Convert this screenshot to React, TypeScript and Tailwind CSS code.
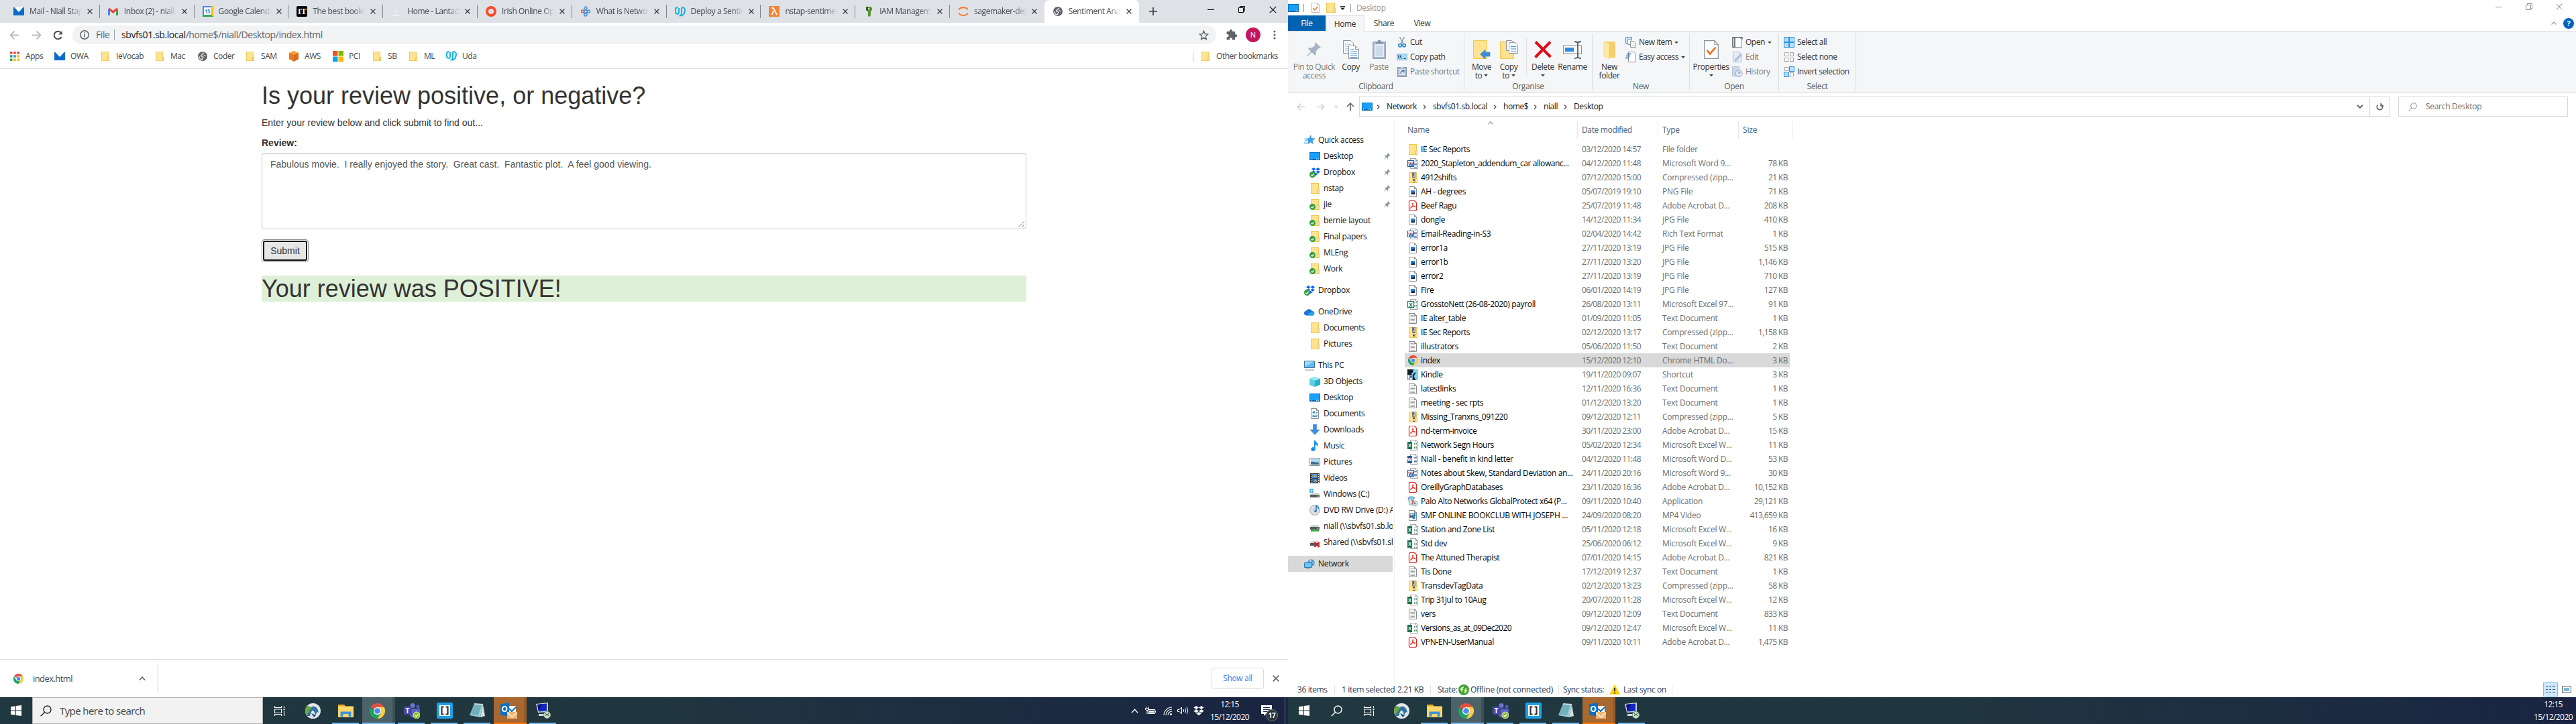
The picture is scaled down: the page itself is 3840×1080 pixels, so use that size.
import React, { ReactNode } from "react";

/* ---------- shared glyphs ---------- */

const Folder = ({ className = "w-[13px] h-4" }: { className?: string }) => (
  <svg className={className} viewBox="0 0 13 16" preserveAspectRatio="none">
    <rect x=".5" y=".5" width="11" height="15" fill="#ffe391" stroke="#f0c84f" />
    <path d="M10.5 9.5h2v6h-2z" fill="#ffe9a8" stroke="#e9bd45" />
  </svg>
);

const Desk = () => (
  <svg className="w-4 h-3" viewBox="0 0 16 12">
    <rect x=".5" y=".5" width="15" height="11" fill="#18a0fb" stroke="#0a72bd" />
    <path d="M1 10h14v1.4H1z" fill="#0b63a5" />
    <path d="M2 10.2h1M10 10.2h1M12 10.2h2" stroke="#fff" />
  </svg>
);

const Chrome = ({ className = "size-[15px]" }: { className?: string }) => (
  <svg className={className} viewBox="0 0 48 48">
    <path d="M24 24 3.2 12A24 24 0 0 1 44.8 12z" fill="#dd5144" />
    <path d="M24 12h20.8A24 24 0 0 1 24 48l10.4-18z" fill="#ffcd46" />
    <path d="M3.2 12A24 24 0 0 0 24 48l10.4-18-20.8 0z" fill="#1da462" />
    <circle cx="24" cy="24" r="11.5" fill="#fff" />
    <circle cx="24" cy="24" r="9" fill="#4c8bf5" />
  </svg>
);

const Globe = () => (
  <svg className="size-[14px]" viewBox="0 0 14 14">
    <circle cx="7" cy="7" r="7" fill="#5f6368" />
    <path d="M9 1.8c-.6 1.4-2 1-2.300 2.200S4 5.200 4.500 6.500s3 .2 3.400 1.600-1.600 1.800-1.800 3.800C3.500 11.500 1.700 9.500 1.700 7" fill="none" stroke="#dee1e6" strokeWidth="1.500" />
    <path d="M8.500 5.500 12 6.500" stroke="#dee1e6" strokeWidth="1.300" />
  </svg>
);

const Mail = () => (
  <svg className="w-4 h-3" viewBox="0 0 16 12">
    <path d="M0 0h16v12H0z" fill="#0a6cc8" />
    <path d="M1.500 0h13L8 7z" fill="#fff" />
  </svg>
);

const Udacity = () => (
  <svg className="w-4 h-[15px]" viewBox="0 0 16 15" fill="none" stroke="#12b3e2" strokeWidth="2">
    <path d="M4.500 1C2 1 1 2.500 1 4v3c0 4.500 5 5.500 5 1V2M10 1.500v8c0 2-1.500 4-3.500 4M10 1.500C13 .5 15 2 15 5s-1.500 8-6 8.500" />
  </svg>
);

const Tick = () => (
  <svg className="size-[9px] absolute left-0 bottom-0" viewBox="0 0 9 9">
    <circle cx="4.500" cy="4.500" r="4.500" fill="#2f9e3a" />
    <path d="m2.200 4.600 1.700 1.700 3-3.400" fill="none" stroke="#fff" strokeWidth="1.300" />
  </svg>
);

const DropboxMark = ({ fill = "#0061fe", className = "w-[13px] h-3" }: { fill?: string; className?: string }) => (
  <svg className={className} viewBox="0 0 24 22" fill={fill}>
    <path d="m6 0 6 4-6 4-6-4zM18 0l6 4-6 4-6-4zM6 8l6 4-6 4-6-4zM18 8l6 4-6 4-6-4zM12 14l6 4-6 4-6-4z" />
  </svg>
);

const Dropbox = () => (
  <span className="relative w-4 h-[15px] flex justify-end">
    <DropboxMark />
    <Tick />
  </span>
);

const TickFolder = () => (
  <span className="relative w-4 h-4 flex justify-end pr-px">
    <Folder />
    <Tick />
  </span>
);

const Page = ({ children }: { children?: ReactNode }) => (
  <svg className="w-4 h-4" viewBox="0 0 16 16">
    <path d="M2.500.5h8l3 3v12h-11z" fill="#fff" stroke="#8c8c8c" />
    <path d="M10.500.5v3h3" fill="none" stroke="#8c8c8c" />
    {children}
  </svg>
);

const TextFile = () => (
  <Page>
    <path d="M4.500 3.500h5M4.500 5.500h7M4.500 7.500h7M4.500 9.500h7M4.500 11.500h7M4.500 13.500h7" stroke="#a6a6a6" />
  </Page>
);

const ImageFile = () => (
  <Page>
    <path d="M5 6h6v6H5z" fill="#1f7fe0" />
    <path d="M5 12l3-3 1 1 2-2v4z" fill="#0b2a55" />
  </Page>
);

const Pdf = () => (
  <svg className="w-4 h-4" viewBox="0 0 16 16" fill="none" stroke="#e2231a">
    <path d="M2.500 2.500q0-2 2-2h6l3 3v10q0 2-2 2h-7q-2 0-2-2z" fill="#fff" strokeWidth="1.200" />
    <path d="M8 4c1.500 0 .6 3-1.500 6S4 11.500 5 10.200s5-2 6.500-1.200-.8 1.200-2.300-.3S6.800 4 8 4z" />
  </svg>
);

const Office = ({ color, letter, old }: { color: string; letter: string; old?: boolean }) => (
  <span className="relative w-4 h-4 block">
    <svg className="w-4 h-4" viewBox="0 0 16 16">
      <path d="M4.500.5h8l3 3v12h-11z" fill="#fff" stroke="#a0a0a0" />
      <path d="M12.500.5v3h3" fill="none" stroke="#a0a0a0" />
      <path d="M10 5.500h4M10 7.500h4M10 9.500h4M10 11.500h4M10 13.500h4" stroke={color} strokeDasharray={letter === "X" ? "1.500 1" : undefined} opacity=".7" />
      <rect x="0" y="3" width={old ? 10 : 7} height={old ? 10 : 11} fill={color} />
      {old && <rect x="1" y="4" width="8" height="8" fill="#fff" />}
    </svg>
    <span
      className={
        "absolute top-[4px] text-center font-bold leading-[9px] " +
        (old ? "left-0 w-[10px] text-[8px] " + (letter === "X" ? "text-[#1f7145]" : "text-[#2a5699]") : "left-0 w-[7px] text-[7px] text-white")
      }
    >
      {letter}
    </span>
  </span>
);

const Zip = () => (
  <svg className="w-4 h-4" viewBox="0 0 16 16">
    <rect x="2.500" y=".5" width="11" height="15" fill="#ffe391" stroke="#f0c84f" />
    <path d="M12.500 9.500h2v6h-2z" fill="#ffe9a8" stroke="#e9bd45" />
    <path d="M7.500.0h4v8h-4z" fill="#b9b9b9" stroke="#777" />
    <path d="M9.500 1v4" stroke="#333" />
    <path d="M9.500 8v8" stroke="#555" strokeWidth="3" strokeDasharray="1 1" />
  </svg>
);

const Kindle = () => (
  <svg className="w-4 h-4" viewBox="0 0 16 16">
    <path d="M0 0h16v16H0z" fill="#7fd4ef" />
    <path d="M0 0h9c-1 3 0 5-3 6l4 10H0z" fill="#10202b" />
    <path d="M12 5c-4 3-4 8 0 11" stroke="#10202b" strokeWidth="2" fill="none" />
    <path d="M.5 8.500h7v7h-7z" fill="#fff" stroke="#999" />
    <path d="m2 14 3.500-3.500M3 10h3v3" stroke="#1557c0" fill="none" strokeWidth="1.300" />
  </svg>
);

const Installer = () => (
  <svg className="w-4 h-4" viewBox="0 0 16 16">
    <path d="M1 2h9l-1 11H3z" fill="#cfe5f5" stroke="#7aa7c9" />
    <ellipse cx="6" cy="2.500" rx="5" ry="1.800" fill="#8fc6e8" stroke="#5f93b8" strokeWidth=".7" />
    <circle cx="11" cy="11" r="4" fill="#dfe7ee" stroke="#8aa" />
    <path d="m6 6 3 2-2 4" stroke="#e46a2e" strokeWidth="2" fill="none" />
    <circle cx="11" cy="11" r="1.400" fill="#3f86c8" />
  </svg>
);

const Mp4 = () => (
  <Page>
    <path d="M3.500 5h6v7h-6z" fill="#555" />
    <path d="M4.500 6.500h4M4.500 8.500h3M4.500 10.500h3" stroke="#cfe6ff" />
    <path d="M10.500 4v7.500" stroke="#0c8ce9" strokeWidth="1.500" />
    <circle cx="9.500" cy="11.500" r="2" fill="#0c8ce9" />
    <path d="M10.500 4q2.500 2 2 5" stroke="#0c8ce9" fill="none" />
  </Page>
);

/* ---------- browser ---------- */

const Close = ({ className = "size-2", color = "#3c4043", w = 1.6 }: { className?: string; color?: string; w?: number }) => (
  <svg className={className} viewBox="0 0 10 10" stroke={color} strokeWidth={w}>
    <path d="m.7.7 8.600 8.600M9.300.7.7 9.300" />
  </svg>
);

const GmailIcon = () => (
  <svg className="w-[15px] h-3" viewBox="0 0 15 12">
    <path d="M1.500 12V2.500" stroke="#4285f4" strokeWidth="3" />
    <path d="M13.500 12V2.500" stroke="#34a853" strokeWidth="3" />
    <path d="M1.200 1.800 7.500 7l6.300-5.200" stroke="#ea4335" strokeWidth="3" fill="none" />
  </svg>
);
const CalIcon = () => (
  <span className="w-4 h-4 bg-[#4285f4] border-b-[3px] border-b-[#34a853] border-r-[3px] border-r-[#fbbc04] p-[2px] pr-0 pb-0 block">
    <span className="block bg-white text-[#4285f4] text-[8px] font-bold leading-[11px] text-center tracking-[-0.5px]">15</span>
  </span>
);
const ItIcon = () => (
  <span className="size-4 rounded-[2px] bg-black text-white font-['Liberation_Serif',serif] font-bold text-[12px] leading-4 text-center block">IT</span>
);
const FaintIcon = () => (
  <svg className="size-4" viewBox="0 0 16 16" stroke="#f4f5f7" strokeWidth="1.500">
    <path d="M8 2v2M8 6v5M2 14h12" />
  </svg>
);
const RingIcon = () => (
  <svg className="size-4" viewBox="0 0 16 16">
    <ellipse cx="8" cy="8" rx="6" ry="6" fill="none" stroke="#fb4b27" strokeWidth="4" />
  </svg>
);
const NetIcon = () => (
  <svg className="size-4" viewBox="0 0 16 16" fill="none" strokeWidth="1.300">
    <circle cx="8" cy="3" r="2" stroke="#3b8ad9" />
    <circle cx="8" cy="8" r="2.200" stroke="#3b8ad9" />
    <circle cx="3.500" cy="8" r="2" stroke="#d94b4b" />
    <circle cx="12.500" cy="8" r="2" stroke="#3b8ad9" />
    <circle cx="8" cy="13" r="2" stroke="#3b8ad9" />
  </svg>
);
const LambdaIcon = () => (
  <svg className="size-4" viewBox="0 0 16 16">
    <path d="M0 0h16v16H0z" fill="#f58536" />
    <path d="M4.500 3h2.500l5 10M7.500 7l-3 6" stroke="#fff" strokeWidth="1.800" fill="none" />
  </svg>
);
const KeyIcon = () => (
  <svg className="size-4" viewBox="0 0 16 16">
    <path d="M4 1h7l2 2v3l-2 2v6l-2 2-2-1V8L4 6z" fill="#5b8f34" />
    <path d="M4 1h3v14L7 8 4 6z" fill="#2f5a1e" />
    <circle cx="8" cy="4" r="1.200" fill="#dee1e6" />
  </svg>
);
const JupyterIcon = () => (
  <svg className="size-4" viewBox="0 0 16 16" fill="none" stroke="#f37726" strokeWidth="2">
    <path d="M1.500 5.500C3 1 13 1 14.500 5.500M1.500 10.500C3 15 13 15 14.500 10.500" />
  </svg>
);

const tabs: [string, ReactNode][] = [
  ["Mail - Niall Stapleton", <Mail />],
  ["Inbox (2) - niall.stap", <GmailIcon />],
  ["Google Calendar", <CalIcon />],
  ["The best books of", <ItIcon />],
  ["Home - Lantadilla", <FaintIcon />],
  ["Irish Online Opinion", <RingIcon />],
  ["What is Network", <NetIcon />],
  ["Deploy a Sentiment", <Udacity />],
  ["nstap-sentiment", <LambdaIcon />],
  ["IAM Management", <KeyIcon />],
  ["sagemaker-deploy", <JupyterIcon />],
];

const Tab = ({ title, icon, active }: { title: string; icon: ReactNode; active?: boolean }) => (
  <div className={"w-[140.800px] h-[34px] shrink-0 flex items-center relative " + (active ? "bg-white rounded-t-lg" : "")}>
    <span className="w-4 ml-3 flex justify-center">{icon}</span>
    <span className="ml-2 w-[78px] overflow-hidden whitespace-nowrap text-[#45494d] tracking-[-0.4px] [mask-image:linear-gradient(90deg,#000_78%,transparent)]">
      {title}
    </span>
    <span className="ml-[8px]">
      <Close />
    </span>
    {!active && title !== "sagemaker-deploy" && <span className="absolute right-0 top-[7px] w-px h-5 bg-[#80868b]" />}
  </div>
);

const Bookmark = ({ w, icon, label }: { w: string; icon: ReactNode; label: string }) => (
  <div className={"flex items-center gap-2 text-[#45494d] whitespace-nowrap tracking-[-0.45px] " + w}>
    <span className="w-4 flex justify-center shrink-0">{icon}</span>
    {label}
  </div>
);

const Browser = () => (
  <div className="w-[1920px] h-[1040px] bg-white flex flex-col overflow-hidden">
    <div className="h-[34px] bg-[#dee1e6] flex pl-2 shrink-0">
      {tabs.map(([t, i]) => (
        <Tab key={t} title={t} icon={i} />
      ))}
      <Tab title="Sentiment Analysis" icon={<Globe />} active />
      <div className="flex items-center flex-1 pl-[15px]">
        <svg className="size-3" viewBox="0 0 12 12" stroke="#3c4043" strokeWidth="1.700">
          <path d="M6 0v12M0 6h12" />
        </svg>
        <div className="ml-auto flex items-center gap-[36px] pr-[17px] pb-[6px]">
          <svg className="size-[10px]" viewBox="0 0 10 10" stroke="#000">
            <path d="M0 5.500h10" />
          </svg>
          <svg className="size-[10px]" viewBox="0 0 10 10" stroke="#000" fill="none">
            <path d="M.5 2.500h7v7h-7zM2.500 2.500v-2h7v7h-2" />
          </svg>
          <Close className="size-[11px]" color="#000" w={1} />
        </div>
      </div>
    </div>

    <div className="h-9 flex items-center shrink-0 pl-[14px] pr-[18px]">
      <svg className="size-[15px]" viewBox="0 0 15 15" fill="none" stroke="#babcbe" strokeWidth="1.800">
        <path d="M14.500 7.500H2M7.500 1.500l-6 6 6 6" />
      </svg>
      <svg className="size-[15px] ml-[18px]" viewBox="0 0 15 15" fill="none" stroke="#babcbe" strokeWidth="1.800">
        <path d="M.5 7.500H13M7.500 1.500l6 6-6 6" />
      </svg>
      <svg className="size-[15px] ml-[17px]" viewBox="0 0 15 15" fill="none" stroke="#4a4d51" strokeWidth="2">
        <path d="M12.700 10A5.800 5.800 0 1 1 12 3.800" />
        <path d="M13.800 1v5.500H8.300z" fill="#4a4d51" stroke="none" />
      </svg>
      <div className="ml-[14px] flex-1 h-7 rounded-full bg-[#f1f3f4] flex items-center pl-[11px] pr-[11px] text-[14px] text-[#5f6368]">
        <svg className="size-[14px]" viewBox="0 0 14 14" fill="none" stroke="#5f6368" strokeWidth="1.500">
          <circle cx="7" cy="7" r="6.200" />
          <path d="M7 6v4.500M7 3.300v1.500" />
        </svg>
        <span className="ml-[10px] tracking-[-0.4px] w-[20px]">File</span>
        <span className="w-px h-4 bg-[#9aa0a6] ml-[7px] mr-[10px]" />
        <span className="tracking-[-0.41px] whitespace-nowrap">
          <span className="text-[#202124]">sbvfs01.sb.local</span>/home$/niall/Desktop/index.html
        </span>
        <svg className="size-[15px] ml-auto" viewBox="0 0 24 24" fill="none" stroke="#5f6368" strokeWidth="2.200">
          <path d="m12 2 2.900 7 7.100.6-5.400 4.900L18.200 22 12 17.900 5.800 22l1.600-7.500L2 9.600 9.100 9z" />
        </svg>
      </div>
      <svg className="size-[18px] ml-[14px]" viewBox="0 0 24 24" fill="#5f6368">
        <path d="M20.500 11H19V7a2 2 0 0 0-2-2h-4V3.500a2.500 2.500 0 0 0-5 0V5H4a2 2 0 0 0-2 2v3.800h1.500a2.700 2.700 0 0 1 0 5.400H2V20a2 2 0 0 0 2 2h3.800v-1.500a2.700 2.700 0 0 1 5.400 0V22H17a2 2 0 0 0 2-2v-4h1.500a2.500 2.500 0 0 0 0-5z" />
      </svg>
      <span className="size-[22px] ml-[12px] rounded-full bg-[#c2185b] text-white text-center leading-[22px] text-[11px]">N</span>
      <svg className="w-1 h-[14px] ml-[19px]" viewBox="0 0 4 14" fill="#5f6368">
        <circle cx="2" cy="2" r="1.600" />
        <circle cx="2" cy="7" r="1.600" />
        <circle cx="2" cy="12" r="1.600" />
      </svg>
    </div>

    <div className="h-[33px] flex items-center shrink-0 pl-[14px] pr-[15px] pb-[5px] border-b border-[#d5d7da]">
      <Bookmark
        w="w-[67px]"
        label="Apps"
        icon={
          <svg className="size-[14px]" viewBox="0 0 14 14">
            <path d="M0 0h3.500v3.500H0zM5.200 0h3.500v3.500H5.200zM10.500 0H14v3.500h-3.500z" fill="#ea4335" />
            <path d="M0 5.200h3.500v3.500H0z" fill="#34a853" />
            <path d="M5.200 5.200h3.500v3.500H5.200z" fill="#4285f4" />
            <path d="M10.500 5.200H14v3.500h-3.500zM10.500 10.500H14V14h-3.500zM5.200 10.500h3.500V14H5.200z" fill="#fbbc04" />
            <path d="M0 10.500h3.500V14H0z" fill="#34a853" />
          </svg>
        }
      />
      <Bookmark w="w-[68px]" label="OWA" icon={<Mail />} />
      <Bookmark w="w-[81px]" label="IeVocab" icon={<Folder className="w-3 h-[14px]" />} />
      <Bookmark w="w-[64px]" label="Mac" icon={<Folder className="w-3 h-[14px]" />} />
      <Bookmark w="w-[71px]" label="Coder" icon={<Globe />} />
      <Bookmark w="w-[65px]" label="SAM" icon={<Folder className="w-3 h-[14px]" />} />
      <Bookmark
        w="w-[66px]"
        label="AWS"
        icon={
          <svg className="size-4" viewBox="0 0 16 16">
            <path d="M8 0 1 3v9l7 4 7-4V3z" fill="#e87722" />
            <path d="M8 0 1 3l7 3 7-3z" fill="#f9a13a" />
            <path d="M8 6v10l7-4V3z" fill="#c8601c" opacity=".5" />
          </svg>
        }
      />
      <Bookmark
        w="w-[58px]"
        label="PCI"
        icon={
          <svg className="size-4" viewBox="0 0 16 16">
            <path d="M0 0h7.500v7.500H0z" fill="#f25022" />
            <path d="M8.500 0H16v7.500H8.500z" fill="#7fba00" />
            <path d="M0 8.500h7.500V16H0z" fill="#00a4ef" />
            <path d="M8.500 8.500H16V16H8.500z" fill="#ffb900" />
          </svg>
        }
      />
      <Bookmark w="w-[54px]" label="SB" icon={<Folder className="w-3 h-[14px]" />} />
      <Bookmark w="w-[57px]" label="ML" icon={<Folder className="w-3 h-[14px]" />} />
      <Bookmark w="w-[60px]" label="Uda" icon={<Udacity />} />
      <span className="ml-auto w-px h-4 bg-[#c4c7ca] mr-[10px]" />
      <Bookmark w="w-[116px]" label="Other bookmarks" icon={<Folder className="w-3 h-[14px]" />} />
    </div>

    <div className="flex-1 overflow-hidden font-['Liberation_Sans',Arial,sans-serif] text-[14px] leading-5 text-[#333]">
      <div className="w-[1140px] ml-[390px]">
        <h1 className="mt-5 mb-[10px] text-[36px] leading-[39.600px] whitespace-nowrap">Is your review positive, or negative?</h1>
        <p className="mb-[10px]">Enter your review below and click submit to find out...</p>
        <div className="font-bold mb-[5px]">Review:</div>
        <div className="relative h-[114px] border border-[#ccc] rounded px-3 py-[6px] text-[#555] shadow-[inset_0_1px_1px_rgba(0,0,0,0.075)] whitespace-pre">
          Fabulous movie.  I really enjoyed the story.  Great cast.  Fantastic plot.  A feel good viewing.
          <svg className="absolute right-px bottom-px size-[11px]" viewBox="0 0 11 11" stroke="#888">
            <path d="m1 10 9-9M6 10l4-4" />
          </svg>
        </div>
        <div className="mt-[15px] w-[70px] h-[34px] rounded border border-[#8c8c8c] bg-white p-px">
          <div className="h-full rounded-[3px] border-2 border-[#101010] bg-[#e6e6e6] flex items-center justify-center">Submit</div>
        </div>
        <h1 className="mt-5 text-[36px] leading-[39.600px] bg-[#dff0d8]">Your review was POSITIVE!</h1>
      </div>
    </div>

    <div className="h-[57px] border-t border-[#d5d7da] flex items-center shrink-0 pl-5 pr-[13px]">
      <Chrome />
      <span className="ml-[14px] text-[13px] text-[#45494d] tracking-[-0.57px]">index.html</span>
      <svg className="w-[10px] h-[6px] ml-[99px]" viewBox="0 0 10 6" fill="none" stroke="#5f6368" strokeWidth="1.600">
        <path d="m1 5.500 4-4.500 4 4.500" />
      </svg>
      <span className="w-px h-11 bg-[#ccc] ml-[18px]" />
      <span className="ml-auto w-[78px] h-8 border border-[#dadce0] rounded flex items-center justify-center text-[#3b78e7] tracking-[-0.35px]">Show all</span>
      <span className="ml-[13px]">
        <Close className="size-[10px]" color="#6b6f73" w={1.8} />
      </span>
    </div>
  </div>
);

/* ---------- file explorer ---------- */

const Arrow = ({ className = "ml-[4px]" }: { className?: string }) => (
  <svg className={"w-[6px] h-[3px] shrink-0 " + className} viewBox="0 0 6 3">
    <path d="M0 0h6L3 3z" fill="#333" />
  </svg>
);

const BigButton = ({ w, icon, a, b, arrow, dim }: { w: string; icon: ReactNode; a: string; b?: string; arrow?: boolean; dim?: boolean }) => (
  <div className={"flex flex-col items-center shrink-0 pt-[8px] tracking-[-0.4px] whitespace-nowrap " + w + (dim ? " text-[#7a7a7a]" : " text-[#333]")}>
    <span className="h-8 flex items-center">{icon}</span>
    <span className="leading-[13px] mt-[3px]">{a}</span>
    <span className="leading-[13px] flex items-center h-[13px]">
      {b}
      {arrow && <Arrow className={b ? "ml-[3px]" : ""} />}
    </span>
  </div>
);

const SmallButton = ({ icon, label, arrow, dim }: { icon: ReactNode; label: string; arrow?: boolean; dim?: boolean }) => (
  <div className={"h-[22px] flex items-center whitespace-nowrap tracking-[-0.5px] " + (dim ? "text-[#7a7a7a]" : "text-[#333]")}>
    <span className="w-4 mr-[4px] flex justify-center">{icon}</span>
    {label}
    {arrow && <Arrow />}
  </div>
);

const Group = ({ w, label, children }: { w: string; label: string; children: ReactNode }) => (
  <div className={"h-[85px] mt-[3px] border-r border-[#dcddde] flex flex-col shrink-0 " + w}>
    <div className="flex-1 flex">{children}</div>
    <div className="h-[13px] text-center leading-[13px] text-[#5a5a5a] tracking-[-0.35px]">{label}</div>
  </div>
);

const Sheets = () => (
  <svg className="w-6 h-7" viewBox="0 0 24 28">
    <path d="M.5.5h11l4 4v15H.5z" fill="#fff" stroke="#8e9499" />
    <path d="M3 6h9M3 9h9M3 12h9M3 15h9" stroke="#7fb3e6" />
    <path d="M8.500 8.500h10l5 5v14h-15z" fill="#fff" stroke="#8e9499" />
    <path d="M18.500 8.500v5h5" fill="none" stroke="#8e9499" />
    <path d="M11 14h6M11 17h10M11 20h10M11 23h10M11 25.500h10" stroke="#4a92dc" />
  </svg>
);

const CheckSheet = ({ className }: { className: string }) => (
  <svg className={className} viewBox="0 0 22 28">
    <path d="M.7.7h15l5.600 5.600v21H.7z" fill="#fff" stroke="#8a8f94" strokeWidth="1.200" />
    <path d="M15.700.7v5.600h5.600" fill="none" stroke="#8a8f94" />
    <path d="m4.500 15 4.500 5.500 8.500-10" fill="none" stroke="#f1671f" strokeWidth="2.600" />
  </svg>
);

const SelGrid = ({ on }: { on: boolean[] }) => (
  <svg className="w-4 h-4" viewBox="0 0 16 16">
    {on.map((v, i) => (
      <rect
        key={i}
        x={(i % 2) * 8 + (v ? 0.5 : 1.5)}
        y={Math.floor(i / 2) * 8 + (v ? 0.5 : 1.5)}
        width={v ? 7 : 5}
        height={v ? 7 : 5}
        fill={v ? "#b5def9" : "#fff"}
        stroke={v ? "#2b93e0" : "#a6a6a6"}
      />
    ))}
  </svg>
);

const Ribbon = () => (
  <div className="h-[93px] bg-[#f5f6f7] border-t border-b border-[#dadbdc] flex shrink-0">
    <Group w="w-[263px]" label="Clipboard">
      <BigButton
        w="w-[78px]"
        dim
        a="Pin to Quick"
        b="access"
        icon={
          <svg className="w-[22px] h-[22px]" viewBox="0 0 22 22" fill="#a6b4c4">
            <path d="m13 0 8 8-2 1.500-1.500-.5-4 5 .5 4-2 1.500-4.500-4.500L1 21H.5v-1L6 14 2 9.500 3.500 8l4 .5 5-4L12 2z" />
          </svg>
        }
      />
      <BigButton w="w-[31px]" a="Copy" icon={<Sheets />} />
      <BigButton
        w="w-[53px]"
        dim
        a="Paste"
        icon={
          <svg className="w-5 h-7" viewBox="0 0 20 28">
            <rect x=".7" y="2.700" width="18.600" height="24.600" fill="#a9b9ce" stroke="#8397b3" />
            <path d="M3 6h14v19H3z" fill="#e4ebf4" />
            <path d="M5 10h10M5 13h10M5 16h10M5 19h10M5 22h10" stroke="#a9bdd8" />
            <path d="M5 2h3V0h4v2h3v3H5z" fill="#8091a8" />
          </svg>
        }
      />
      <div className="pt-[2px]">
        <SmallButton
          label="Cut"
          icon={
            <svg className="w-3 h-4" viewBox="0 0 12 16" fill="none">
              <path d="M2.500 0 8 11M9.500 0 4 11" stroke="#8c97a3" strokeWidth="1.500" />
              <circle cx="3" cy="12.800" r="2.200" stroke="#1f86d2" strokeWidth="1.600" />
              <circle cx="9" cy="12.800" r="2.200" stroke="#1f86d2" strokeWidth="1.600" />
            </svg>
          }
        />
        <SmallButton
          label="Copy path"
          icon={
            <svg className="w-4 h-[10px]" viewBox="0 0 16 10">
              <path d="M.5.5h15v9H.5z" fill="#a9d9f7" stroke="#7fbbe3" />
              <path d="m2 2.500 2 5M5 2.500l2 5M9 7.500h1M11 7.500h1M13 7.500h1" stroke="#14304d" strokeWidth="1.100" />
            </svg>
          }
        />
        <SmallButton
          dim
          label="Paste shortcut"
          icon={
            <svg className="w-[14px] h-4" viewBox="0 0 14 16">
              <rect x=".5" y="1.500" width="13" height="14" fill="#a9b9ce" stroke="#8397b3" />
              <path d="M3 4h8v9H3zM5 0h4v2H5z" fill="#dfe7f1" />
              <path d="M5 11c0-3 1-4 4-4M6.500 6H10v3.500" stroke="#5b7bab" strokeWidth="1.400" fill="none" />
            </svg>
          }
        />
      </div>
    </Group>

    <Group w="w-[191px]" label="Organise">
      <BigButton
        w="w-[49px] pl-0.5"
        a="Move"
        b="to"
        arrow
        icon={
          <svg className="w-[26px] h-7" viewBox="0 0 26 28">
            <path d="M.5.5h20v27H.5z" fill="#ffe391" stroke="#f0c84f" />
            <path d="M25 18v6h-7v4l-7.500-7 7.500-7v4z" fill="#3a8fdc" stroke="#2b78bd" strokeWidth=".6" />
          </svg>
        }
      />
      <BigButton
        w="w-[34px]"
        a="Copy"
        b="to"
        arrow
        icon={
          <svg className="w-[27px] h-7" viewBox="0 0 27 28">
            <path d="M.5 2h20v25.500H.5z" fill="#ffe391" stroke="#f0c84f" />
            <path d="M9.500.5h8l3 3v12h-11z" fill="#fff" stroke="#8e9499" />
            <path d="M13.500 3.500h9l4 4v12h-13z" fill="#fff" stroke="#8e9499" />
            <path d="M16 9.500h8M16 12h8M16 14.500h8M16 17h8" stroke="#4a92dc" />
          </svg>
        }
      />
      <span className="w-px h-[54px] mt-[7px] ml-[9px] bg-[#dcddde]" />
      <BigButton
        w="w-[48px]"
        a="Delete"
        arrow
        icon={
          <svg className="w-[26px] h-[26px]" viewBox="0 0 26 26">
            <path d="M2 1.500 24.500 24M24 1.500 1.500 24.500" stroke="#e00b17" strokeWidth="4" />
          </svg>
        }
      />
      <BigButton
        w="w-[40px]"
        a="Rename"
        icon={
          <svg className="w-7 h-[27px]" viewBox="0 0 28 27" fill="none">
            <path d="M.6 7h26.800v12H.6z" fill="#fff" stroke="#8d9399" strokeWidth="1.200" />
            <path d="M3 10h13v6H3z" fill="#2f8bdd" />
            <path d="M22 1v25M17 1c3 0 4 .5 5 2 1-1.500 2-2 5-2M17 26c3 0 4-.5 5-2 1 1.500 2 2 5 2" stroke="#55595d" strokeWidth="1.800" />
          </svg>
        }
      />
    </Group>

    <Group w="w-[145px]" label="New">
      <BigButton
        w="w-[48px] ml-px"
        a="New"
        b="folder"
        icon={
          <svg className="w-[19px] h-[27px]" viewBox="0 0 19 27">
            <path d="M2 1h16v24H8z" fill="#f6cf6b" />
            <path d="M1 1l8 3v23l-8-4z" fill="#ffe9a8" stroke="#efc75a" strokeWidth=".5" />
          </svg>
        }
      />
      <div className="pt-[2px]">
        <SmallButton
          label="New item"
          arrow
          icon={
            <svg className="size-4" viewBox="0 0 16 16">
              <path d="M.5.5h9v9h-9z" fill="#cfeafc" stroke="#3a92d6" />
              <path d="M3.500 3.500h6v8h-6z" fill="#fff" stroke="#8e9499" />
              <path d="M7.500 6.500h5l3 3v6h-8z" fill="#fff" stroke="#8e9499" />
              <path d="M9 10.500h5M9 12.500h5" stroke="#c8c8c8" />
            </svg>
          }
        />
        <SmallButton
          label="Easy access"
          arrow
          icon={
            <svg className="size-4" viewBox="0 0 16 16" fill="none">
              <path d="M4.500.5h8l3 3v12h-11z" fill="#fff" stroke="#8e9499" />
              <path d="M2 3.500h6M1 6.500h6M0 9.500h5" stroke="#1a6fb5" strokeWidth="1.400" />
            </svg>
          }
        />
      </div>
    </Group>

    <Group w="w-[133px]" label="Open">
      <BigButton w="w-[63px]" a="Properties" arrow icon={<CheckSheet className="w-[22px] h-7" />} />
      <div className="pt-[2px]">
        <SmallButton
          label="Open"
          arrow
          icon={
            <svg className="size-4" viewBox="0 0 16 16">
              <path d="M1.500.5h9l4 4v11h-13z" fill="#fff" stroke="#8a8f94" />
              <path d="M1 .5h3v15H1zM4 .5h11v3" fill="none" stroke="#55595d" strokeWidth="1.500" />
            </svg>
          }
        />
        <SmallButton
          dim
          label="Edit"
          icon={
            <svg className="size-4" viewBox="0 0 16 16">
              <path d="M1.500.5h9l3 3v12h-12z" fill="#e6edf6" stroke="#a9b9ce" />
              <path d="m4 14 1-3 8-8 2 2-8 8z" fill="#b9cbe4" stroke="#8ba3c6" strokeWidth=".7" />
            </svg>
          }
        />
        <SmallButton
          dim
          label="History"
          icon={
            <svg className="size-4" viewBox="0 0 16 16">
              <path d="M.5.5h10v14H.5z" fill="#ccd8e8" stroke="#b4c4da" />
              <circle cx="10" cy="10.500" r="5" fill="#dfe7f1" stroke="#8ba3c6" />
              <path d="M10 7.500v3l2.500-1.500" stroke="#6d86ad" fill="none" />
            </svg>
          }
        />
      </div>
    </Group>

    <Group w="w-[115px]" label="Select">
      <div className="pt-[2px] pl-[7px]">
        <SmallButton label="Select all" icon={<SelGrid on={[true, true, true, true]} />} />
        <SmallButton label="Select none" icon={<SelGrid on={[false, false, false, false]} />} />
        <SmallButton label="Invert selection" icon={<SelGrid on={[false, true, true, false]} />} />
      </div>
    </Group>
  </div>
);

const Crumb = ({ w, children }: { w: string; children: string }) => (
  <span className={"flex items-center shrink-0 whitespace-nowrap tracking-[-0.4px] text-[#111] " + w}>
    <svg className="w-[5px] h-[7px] mr-[10px]" viewBox="0 0 5 7" fill="none" stroke="#555" strokeWidth="1.300">
      <path d="m1 .5 3 3-3 3" />
    </svg>
    {children}
  </span>
);

const Pin = () => (
  <svg className="w-[10px] h-[10px] ml-auto mr-[3px]" viewBox="0 0 22 22" fill="#8a98a5">
    <path d="m13 0 8 8-2 1.500-1.500-.5-4 5 .5 4-2 1.500-4.500-4.500L1 21H.5v-1L6 14 2 9.500 3.500 8l4 .5 5-4L12 2z" />
  </svg>
);

const Drive = ({ children }: { children?: ReactNode }) => (
  <svg className="w-4 h-4" viewBox="0 0 16 16">
    <path d="M3 6h10l2 3H1z" fill="#d3d5d7" />
    <path d="M1 9h14v4H1z" fill="#55595c" />
    <path d="M11 11h2.500" stroke="#57e36a" strokeWidth="1.500" />
    {children}
  </svg>
);

type NavItem = [string, ReactNode, boolean?];

const QuickStar = () => (
  <svg className="w-4 h-[14px]" viewBox="0 0 16 14">
    <path d="m9.500 0 1.700 4.400 4.800.3-3.700 3 1.200 4.800-4-2.600L5.300 13l1.400-5-3.500-3 4.600-.5z" fill="#3aa0ea" stroke="#2480c6" strokeWidth=".5" />
    <path d="M0 5h4M1 7.500h4M0 10h4M0 12.500h4" stroke="#6cbcf0" />
  </svg>
);
const Cloud = () => (
  <svg className="w-4 h-[11px]" viewBox="0 0 16 11">
    <path d="M3.500 10.500a3.400 3.400 0 0 1-.4-6.800A5 5 0 0 1 12 4a3.300 3.300 0 0 1 .8 6.500z" fill="#1976d2" />
    <path d="M5 10.500c2-4 5-6 7.500-6a3.100 3.100 0 0 1 .3 6z" fill="#28a0ea" />
  </svg>
);
const Pc = () => (
  <svg className="w-4 h-[15px]" viewBox="0 0 16 15">
    <path d="M.5.5h15v10H.5z" fill="#5cc0fa" stroke="#4c6f8c" />
    <path d="M1 1h14L1 9z" fill="#9adbff" />
    <path d="M1 14h14" stroke="#8296a8" />
  </svg>
);

const navGroups: { indentFrom: number; items: NavItem[] }[] = [
  {
    indentFrom: 1,
    items: [
      ["Quick access", <QuickStar />],
      ["Desktop", <Desk />, true],
      ["Dropbox", <Dropbox />, true],
      ["nstap", <Folder />, true],
      ["jie", <TickFolder />, true],
      ["bernie layout", <TickFolder />],
      ["Final papers", <TickFolder />],
      ["MLEng", <TickFolder />],
      ["Work", <TickFolder />],
    ],
  },
  { indentFrom: 1, items: [["Dropbox", <Dropbox />]] },
  { indentFrom: 1, items: [["OneDrive", <Cloud />], ["Documents", <Folder />], ["Pictures", <Folder />]] },
  {
    indentFrom: 1,
    items: [
      ["This PC", <Pc />],
      [
        "3D Objects",
        <svg className="w-4 h-[15px]" viewBox="0 0 16 15">
          <path d="M8 0 0 3v9l8 3 8-3V3z" fill="#22b3cf" />
          <path d="M8 0 0 3l8 3 8-3z" fill="#9be9f5" />
          <path d="M0 3v9l8 3V6z" fill="#5fd0e3" />
        </svg>,
      ],
      ["Desktop", <Desk />],
      [
        "Documents",
        <Page>
          <path d="M5 4.500h3M4.500 6.500h4M10 6.500h2M4.500 8.500h7M4.500 10.500h3M9 10.500h3M4.500 12.500h7" stroke="#2f8bc9" />
        </Page>,
      ],
      [
        "Downloads",
        <svg className="w-4 h-4" viewBox="0 0 16 16">
          <path d="M5.500 0h5v8H15l-7 7.500L1 8h4.500z" fill="#3a8fe0" stroke="#2874bd" strokeWidth=".5" />
        </svg>,
      ],
      [
        "Music",
        <svg className="w-4 h-4" viewBox="0 0 16 16" fill="#1492ea">
          <path d="M7 0h1.800c.3 2.500 4.400 4 4 7.200-.2 1.300-.8 2-1.300 2.300C12 7 9.500 6 8.800 6v7A3.300 3 0 1 1 7 10.300z" />
        </svg>,
      ],
      [
        "Pictures",
        <svg className="w-4 h-3" viewBox="0 0 16 12">
          <path d="M.5.5h15v11H.5z" fill="#fff" stroke="#8c8c8c" />
          <path d="M2 2h12v8H2z" fill="#a9dbf7" />
          <path d="M2 6c4-1 8 1 12 1v3H2z" fill="#3b6a86" />
        </svg>,
      ],
      [
        "Videos",
        <svg className="w-4 h-[15px]" viewBox="0 0 16 15">
          <path d="M1 0h14v15H1z" fill="#3a3a3a" />
          <path d="M4 1h8v6H4z" fill="#4a90d8" />
          <path d="M4 8h8v6H4z" fill="#356fb8" />
          <path d="M5 5l3-3 3 3zM6 12l3-3 3 4z" fill="#e6a72c" />
          <path d="M2.500 1v14M13.500 1v14" stroke="#eee" strokeDasharray="1.500 1.500" />
        </svg>,
      ],
      [
        "Windows (C:)",
        <Drive>
          <path d="M0 0h2.500v2.500H0zM3.200 0h2.500v2.500H3.200zM0 3.200h2.500v2.500H0zM3.200 3.200h2.500v2.500H3.200z" fill="#1aa7ee" />
        </Drive>,
      ],
      [
        "DVD RW Drive (D:) ABC",
        <svg className="w-4 h-4" viewBox="0 0 16 16">
          <circle cx="8" cy="8" r="7.500" fill="#dcdfe2" stroke="#a3a8ad" />
          <circle cx="8" cy="8" r="2" fill="#fff" stroke="#a3a8ad" />
          <path d="M10 1v8M10 1q4 2 3 5" stroke="#1c7fcb" strokeWidth="1.500" fill="none" />
          <circle cx="9" cy="9.500" r="1.800" fill="#1c7fcb" />
        </svg>,
      ],
      [
        "niall (\\\\sbvfs01.sb.local)",
        <Drive>
          <path d="M2 14.500h12M8 12v3" stroke="#39a845" strokeWidth="2.500" />
        </Drive>,
      ],
      [
        "Shared (\\\\sbvfs01.sb.local)",
        <Drive>
          <path d="m7.500 8 7 7M14.500 8l-7 7" stroke="#e01520" strokeWidth="2.200" />
        </Drive>,
      ],
    ],
  },
  {
    indentFrom: 1,
    items: [
      [
        "Network",
        <svg className="w-4 h-[15px]" viewBox="0 0 16 15">
          <circle cx="10.500" cy="5.500" r="5.300" fill="#5596c8" />
          <path d="M8 2q3-1 3 1l-2 2zM12 5l3-1v3z" fill="#bfe0f5" />
          <path d="M.5 5.500h11v7H.5z" fill="#66c4fa" stroke="#3d78a6" />
          <path d="M3 14.500h6" stroke="#7a93a8" />
        </svg>,
      ],
    ],
  },
];

const Nav = () => (
  <div className="w-[156px] pt-[16px] shrink-0 flex flex-col gap-2">
    {navGroups.map((g, gi) => (
      <div key={gi}>
        {g.items.map(([label, icon, pinned], i) => (
          <div
            key={i}
            className={
              "h-6 flex items-center overflow-hidden whitespace-nowrap tracking-[-0.3px] text-[#111] " +
              (i ? "pl-8 " : "pl-6 ") +
              (label === "Network" ? "bg-[#d9d9d9]" : "")
            }
          >
            <span className="w-4 h-4 flex items-center justify-center shrink-0 mr-[5px]">{icon}</span>
            {label}
            {pinned && <Pin />}
          </div>
        ))}
      </div>
    ))}
  </div>
);

const icons: Record<string, ReactNode> = {
  folder: <Folder />,
  zip: <Zip />,
  img: <ImageFile />,
  pdf: <Pdf />,
  txt: <TextFile />,
  wordOld: <Office color="#2a5699" letter="W" old />,
  word: <Office color="#2a5699" letter="W" />,
  xlsOld: <Office color="#1f7145" letter="X" old />,
  xls: <Office color="#1f7145" letter="X" />,
  chrome: <Chrome />,
  kindle: <Kindle />,
  app: <Installer />,
  mp4: <Mp4 />,
};

const T3 = "tracking-[-0.35px]";
const T4 = "tracking-[-0.42px]";
const T6 = "tracking-[-0.6px]";

const files: [string, string, string, string, string, string][] = [
  ["folder", "IE Sec Reports", "03/12/2020 14:57", "File folder", "", T4],
  ["wordOld", "2020_Stapleton_addendum_car allowanc...", "04/12/2020 11:48", "Microsoft Word 9...", "78 KB", T4],
  ["zip", "4912shifts", "07/12/2020 15:00", "Compressed (zipp...", "21 KB", T4],
  ["img", "AH - degrees", "05/07/2019 19:10", "PNG File", "71 KB", T3],
  ["pdf", "Beef Ragu", "25/07/2019 11:48", "Adobe Acrobat D...", "208 KB", T3],
  ["img", "dongle", "14/12/2020 11:34", "JPG File", "410 KB", T3],
  ["wordOld", "Email-Reading-in-S3", "02/04/2020 14:42", "Rich Text Format", "1 KB", T3],
  ["img", "error1a", "27/11/2020 13:19", "JPG File", "515 KB", T3],
  ["img", "error1b", "27/11/2020 13:20", "JPG File", "1,146 KB", T3],
  ["img", "error2", "27/11/2020 13:19", "JPG File", "710 KB", T3],
  ["img", "Fire", "06/01/2020 14:19", "JPG File", "127 KB", T3],
  ["xlsOld", "GrosstoNett (26-08-2020) payroll", "26/08/2020 13:11", "Microsoft Excel 97...", "91 KB", T3],
  ["txt", "IE alter_table", "01/09/2020 11:05", "Text Document", "1 KB", T3],
  ["zip", "IE Sec Reports", "02/12/2020 13:17", "Compressed (zipp...", "1,158 KB", T4],
  ["txt", "illustrators", "05/06/2020 11:50", "Text Document", "2 KB", T3],
  ["chrome", "index", "15/12/2020 12:10", "Chrome HTML Do...", "3 KB", T3],
  ["kindle", "Kindle", "19/11/2020 09:07", "Shortcut", "3 KB", T3],
  ["txt", "latestlinks", "12/11/2020 16:36", "Text Document", "1 KB", T3],
  ["txt", "meeting - sec rpts", "01/12/2020 13:20", "Text Document", "1 KB", T3],
  ["zip", "Missing_Tranxns_091220", "09/12/2020 12:11", "Compressed (zipp...", "5 KB", T4],
  ["pdf", "nd-term-invoice", "30/11/2020 23:00", "Adobe Acrobat D...", "15 KB", T3],
  ["xls", "Network Segn Hours", "05/02/2020 12:34", "Microsoft Excel W...", "11 KB", T3],
  ["word", "Niall - benefit in kind letter", "04/12/2020 11:48", "Microsoft Word D...", "53 KB", T3],
  ["wordOld", "Notes about Skew, Standard Deviation an...", "24/11/2020 20:16", "Microsoft Word 9...", "30 KB", T3],
  ["pdf", "OreillyGraphDatabases", "23/11/2020 16:36", "Adobe Acrobat D...", "10,152 KB", T3],
  ["app", "Palo Alto Networks GlobalProtect x64 (P...", "09/11/2020 10:40", "Application", "29,121 KB", T3],
  ["mp4", "SMF ONLINE BOOKCLUB WITH JOSEPH ...", "24/09/2020 08:20", "MP4 Video", "413,659 KB", "tracking-[-0.26px]"],
  ["xls", "Station and Zone List", "05/11/2020 12:18", "Microsoft Excel W...", "16 KB", T3],
  ["xls", "Std dev", "25/06/2020 06:12", "Microsoft Excel W...", "9 KB", T3],
  ["pdf", "The Attuned Therapist", "07/01/2020 14:15", "Adobe Acrobat D...", "821 KB", T3],
  ["txt", "Tis Done", "17/12/2019 12:37", "Text Document", "1 KB", T3],
  ["zip", "TransdevTagData", "02/12/2020 13:23", "Compressed (zipp...", "58 KB", T3],
  ["xls", "Trip 31Jul to 10Aug", "20/07/2020 11:28", "Microsoft Excel W...", "12 KB", T4],
  ["txt", "vers", "09/12/2020 12:09", "Text Document", "833 KB", T3],
  ["xls", "Versions_as_at_09Dec2020", "09/12/2020 12:47", "Microsoft Excel W...", "11 KB", T6],
  ["pdf", "VPN-EN-UserManual", "09/11/2020 10:11", "Adobe Acrobat D...", "1,475 KB", T3],
];

const FileList = () => (
  <div className="w-[593px] ml-[15px] shrink-0 flex flex-col">
    <div className="relative h-[26px] flex items-center text-[#4c607a] tracking-[-0.2px] ml-[-2px]">
      <svg className="absolute left-[126px] top-0 w-2 h-[5px]" viewBox="0 0 8 5" fill="none" stroke="#666">
        <path d="m.5 4.500 3.500-4 3.500 4" />
      </svg>
      <span className="w-[260px] h-full border-r border-[#e5e5e5] pl-[6px] leading-[26px]">Name</span>
      <span className="w-[120px] h-full border-r border-[#e5e5e5] pl-[6px] leading-[26px] tracking-[-0.35px]">Date modified</span>
      <span className="w-[120px] h-full border-r border-[#e5e5e5] pl-[6px] leading-[26px]">Type</span>
      <span className="w-[80px] h-full border-r border-[#e5e5e5] pl-[6px] leading-[26px]">Size</span>
    </div>
    <div className="pt-[5px]">
      {files.map(([icon, name, date, type, size, tr], i) => (
        <div key={i} className={"w-[574px] h-[21px] flex items-center whitespace-nowrap text-[#6d6d6d] " + (icon === "chrome" ? "bg-[#d9d9d9]" : "")}>
          <span className="w-4 flex justify-center ml-1 mr-1 shrink-0">{icons[icon]}</span>
          <span className={"w-[240px] shrink-0 text-black " + tr}>{name}</span>
          <span className="w-[120px] shrink-0 tracking-[-0.59px]">{date}</span>
          <span className="w-[110px] shrink-0 tracking-[-0.22px]">{type}</span>
          <span className="flex-1 text-right pr-[3px] tracking-[-0.6px]">{size}</span>
        </div>
      ))}
    </div>
  </div>
);

const Sep = ({ className }: { className: string }) => <span className={"w-px h-[14px] bg-[#e3e3e3] shrink-0 " + className} />;

const Explorer = () => (
  <div className="w-[1920px] h-[1040px] bg-white flex flex-col overflow-hidden">
    <div className="h-[23px] flex items-center shrink-0 pr-[20px]">
      <Desk />
      <span className="w-px h-3 bg-[#999] ml-[7px]" />
      <CheckSheet className="w-3 h-[15px] ml-[11px]" />
      <Folder className="w-[14px] h-[15px] ml-[10px]" />
      <svg className="w-[7px] h-[6px] ml-[7px]" viewBox="0 0 7 6">
        <path d="M0 .5h7" stroke="#222" />
        <path d="M0 2.500h7L3.500 6z" fill="#222" />
      </svg>
      <span className="w-px h-3 bg-[#999] ml-[8px]" />
      <span className="ml-[8px] text-[#999] tracking-[-0.35px]">Desktop</span>
      <div className="ml-auto flex items-center gap-[35px] pb-[3px]">
        <svg className="size-[10px]" viewBox="0 0 10 10" stroke="#8a8a8a">
          <path d="M0 5.500h10" />
        </svg>
        <svg className="size-[10px]" viewBox="0 0 10 10" stroke="#8a8a8a" fill="none">
          <path d="M.5 2.500h7v7h-7zM2.500 2.500v-2h7v7h-2" />
        </svg>
        <Close className="size-[10px]" color="#8a8a8a" w={1} />
      </div>
    </div>
    <div className="h-[23px] flex shrink-0 text-[#333] tracking-[-0.4px]">
      <span className="w-14 bg-[#0063b1] text-white text-center leading-6">File</span>
      <span className="w-[58px] h-6 relative bg-[#f5f6f7] border border-b-0 border-[#dadbdc] text-center leading-6">Home</span>
      <span className="w-[58px] text-center leading-6">Share</span>
      <span className="w-[56px] text-center leading-6">View</span>
      <div className="ml-auto flex items-center pr-[3px]">
        <svg className="w-2 h-[5px] mr-[10px]" viewBox="0 0 8 5" fill="none" stroke="#999" strokeWidth="1.300">
          <path d="m.5 4.500 3.500-3.500 3.500 3.500" />
        </svg>
        <span className="size-4 rounded-full bg-[#0063c1] text-white font-bold text-center leading-4 text-[11px]">?</span>
      </div>
    </div>
    <Ribbon />

    <div className="h-[42px] flex items-center shrink-0 pl-[13px] pr-3 pb-[2px]">
      <svg className="w-3 h-[11px]" viewBox="0 0 12 11" fill="none" stroke="#cfcfcf" strokeWidth="1.500">
        <path d="M12 5.500H1.500M6 .7 1.200 5.500 6 10.300" />
      </svg>
      <svg className="w-3 h-[11px] ml-[18px]" viewBox="0 0 12 11" fill="none" stroke="#cfcfcf" strokeWidth="1.500">
        <path d="M0 5.500h10.500M6 .7l4.800 4.800L6 10.300" />
      </svg>
      <svg className="w-[6px] h-1 ml-[14px]" viewBox="0 0 6 4" fill="none" stroke="#d6d6d6" strokeWidth="1.500">
        <path d="m.5.5 2.500 3 2.500-3" />
      </svg>
      <svg className="w-3 h-3 ml-[12px]" viewBox="0 0 12 12" fill="none" stroke="#6a6a6a" strokeWidth="1.700">
        <path d="M6 12V1.500M1 6l5-5 5 5" />
      </svg>
      <div className="ml-[7px] flex-1 h-[30px] border border-[#d9d9d9] flex items-center">
        <span className="ml-[3px] mr-[6px]">
          <Desk />
        </span>
        <Crumb w="w-[69px]">Network</Crumb>
        <Crumb w="w-[105px]">sbvfs01.sb.local</Crumb>
        <Crumb w="w-[60px]">home$</Crumb>
        <Crumb w="w-[45px]">niall</Crumb>
        <Crumb w="w-[80px]">Desktop</Crumb>
        <svg className="w-[10px] h-[6px] ml-auto" viewBox="0 0 10 6" fill="none" stroke="#666" strokeWidth="2">
          <path d="m1 .8 4 4 4-4" />
        </svg>
        <span className="w-px h-full bg-[#d9d9d9] ml-[9px]" />
        <span className="w-[29px] flex justify-center">
          <svg className="size-[11px]" viewBox="0 0 11 11" fill="none" stroke="#666" strokeWidth="1.700">
            <path d="M8.500 2.500A4.200 4.200 0 1 1 3 2M3.800 0v3.800H0" transform="matrix(-1 0 0 1 11 0) rotate(0)" />
          </svg>
        </span>
      </div>
      <div className="ml-3 w-[253px] h-[30px] border border-[#d9d9d9] flex items-center pl-[14px] text-[#6d6d6d] tracking-[-0.3px]">
        <svg className="w-[13px] h-[13px] mr-[13px]" viewBox="0 0 13 13" fill="none" stroke="#8a8a8a">
          <circle cx="8" cy="5" r="4.300" />
          <path d="M5 8 .5 12.500" />
        </svg>
        Search Desktop
      </div>
    </div>

    <div className="flex-1 flex overflow-hidden">
      <Nav />
      <div className="w-px h-full bg-[#f0f0f0] ml-[2px] shrink-0" />
      <FileList />
    </div>

    <div className="h-[23px] flex items-center shrink-0 pl-[14px] pr-1 text-[#1e395b] whitespace-nowrap tracking-[-0.4px]">
      <span className="w-[55px]">36 items</span>
      <Sep className="mr-[10px]" />
      <span className="w-[83px] tracking-[-0.35px]">1 item selected</span>
      <span className="w-[49px]">2.21 KB</span>
      <Sep className="mr-[10px]" />
      <span className="w-[31px]">State:</span>
      <svg className="size-4" viewBox="0 0 16 16" fill="none">
        <circle cx="8" cy="8" r="8" fill="#3da336" />
        <path d="M5 11V6.500Q5 4 8 4M3 8l2-3 2 3M11 5v4.500Q11 12 8 12M9 8l2 3 2-3" stroke="#e9f7b0" strokeWidth="1.500" />
      </svg>
      <span className="w-[131px] ml-[2px] tracking-[-0.23px]">Offline (not connected)</span>
      <Sep className="mr-[6px]" />
      <span className="w-[69px]">Sync status:</span>
      <svg className="w-4 h-[15px]" viewBox="0 0 16 15">
        <path d="M8 0 16 15H0z" fill="#ffcf0a" />
        <path d="M8 5v5M8 11.500v2" stroke="#222" strokeWidth="1.800" />
      </svg>
      <span className="w-[72px] ml-[5px]">Last sync on</span>
      <Sep className="" />
      <div className="ml-auto flex gap-[3px]">
        <span className="w-[22px] h-[21px] bg-[#cce8ff] border border-[#7fc1f0] flex items-center justify-center">
          <svg className="w-[14px] h-[11px]" viewBox="0 0 14 11" stroke="#4a5a68">
            <path d="M0 1.500h3M5 1.500h3M10 1.500h4M0 5.500h3M5 5.500h3M10 5.500h4M0 9.500h3M5 9.500h3M10 9.500h4" />
          </svg>
        </span>
        <span className="w-5 h-[21px] flex items-center justify-center">
          <svg className="w-[14px] h-[11px]" viewBox="0 0 14 11" fill="none" stroke="#4a5a68">
            <path d="M.5.5h13v10H.5z" />
            <path d="M3 3h8v5H3z" fill="#7fb5dc" stroke="none" />
          </svg>
        </span>
      </div>
    </div>
  </div>
);

/* ---------- taskbar ---------- */

const WinLogo = () => (
  <svg className="size-4" viewBox="0 0 16 16" fill="#fff">
    <path d="M0 2.200 7 1.200v6.300H0zM8 1.100 16 0v7.500H8zM0 8.500h7v6.300l-7-1zM8 8.500h8V16l-8-1.100z" />
  </svg>
);
const Lens = ({ color }: { color: string }) => (
  <svg className="w-[17px] h-[17px]" viewBox="0 0 17 17" fill="none" stroke={color} strokeWidth="1.400">
    <circle cx="10.500" cy="6.500" r="5.500" />
    <path d="M6.500 10.500.7 16.300" />
  </svg>
);
const TaskView = () => (
  <svg className="w-4 h-[15px]" viewBox="0 0 16 15" fill="none" stroke="#fff" strokeWidth="1.100">
    <path d="M.6 0v2.500h10V0M.6 15v-2.500h10V15M.6 5h10v5.500H.6zM14.500 0v3M14.500 7v8" />
    <path d="M13.500 4h2v2h-2z" fill="#fff" stroke="none" />
  </svg>
);

const appIcons: { id: string; icon: ReactNode; open?: boolean }[] = [
  {
    id: "vpn",
    icon: (
      <svg className="size-[23px]" viewBox="0 0 23 23">
        <circle cx="11.500" cy="11.500" r="11.500" fill="#dfe6ea" />
        <path d="M3 3.500A11.500 11.500 0 0 0 3 19l9-12z" fill="#6aa442" />
        <path d="M2 19 10 5q8-2 10 9l-2-1-3 5q-1-8-5-7-2 4-3 8z" fill="#31719f" />
        <path d="m9 15 7 3-3 3z" fill="#1c4f78" />
      </svg>
    ),
  },
  {
    id: "files",
    open: true,
    icon: (
      <svg className="w-[23px] h-[19px]" viewBox="0 0 23 19">
        <path d="M0 0h9l1.500 2.500H23V19H0z" fill="#ffd766" />
        <path d="M0 0h9l1.500 2.500H0z" fill="#e8a81e" />
        <path d="M3.500 18V10.500h16V18h-4v-4h-8v4z" fill="#3f93d9" />
      </svg>
    ),
  },
  { id: "chrome", open: true, icon: <Chrome className="size-[23px]" /> },
  {
    id: "teams",
    open: true,
    icon: (
      <span className="relative block w-6 h-[23px]">
        <svg className="w-6 h-[23px]" viewBox="0 0 24 23">
          <circle cx="13" cy="3.500" r="3.500" fill="#6f74cf" />
          <circle cx="21" cy="5" r="2.500" fill="#5059c9" />
          <path d="M8 8h16v7q-1 5-5 5-3 3-7 1-4-2-4-6z" fill="#5b60c2" />
          <path d="M0 5h12v12H0z" fill="#4447a8" />
          <circle cx="19" cy="18" r="5" fill="#86bd1d" stroke="#fff" strokeWidth=".8" />
          <path d="m16.500 18 2 2 3-3.500" fill="none" stroke="#fff" strokeWidth="1.300" />
        </svg>
        <span className="absolute left-0 top-[5px] w-3 text-center text-white font-bold text-[10px] leading-3">T</span>
      </span>
    ),
  },
  {
    id: "brackets",
    open: true,
    icon: (
      <svg className="size-6" viewBox="0 0 24 24">
        <rect width="24" height="24" rx="2" fill="#1da1e6" />
        <path d="M4 4h16v16H4z" fill="#fff" />
        <path d="M10.500 6.500H7.500v11h3M13.500 6.500h3v11h-3" fill="none" stroke="#333" strokeWidth="2.200" />
      </svg>
    ),
  },
  {
    id: "notepad",
    open: true,
    icon: (
      <svg className="w-[23px] h-[22px]" viewBox="0 0 23 22">
        <path d="m7 1 13 1-4 19L0 18z" fill="#9fd0d6" />
        <path d="m7 1 11 1-5 16L1 17z" fill="#6fb0ba" />
        <path d="m20 2 3 17-7 2z" fill="#d7dcdc" />
        <path d="m7 1 13 1" stroke="#d0d7d8" strokeWidth="2" />
      </svg>
    ),
  },
  {
    id: "outlook",
    open: true,
    icon: (
      <span className="relative block w-[25px] h-[24px]">
        <svg className="w-[25px] h-6" viewBox="0 0 25 24">
          <path d="M12 5h11v12H12z" fill="#fff" />
          <path d="m13 9 4 4 7-7" stroke="#0a6fc4" strokeWidth="2" fill="none" />
          <path d="m0 2.500 13-2.500v21L0 18.500z" fill="#0a6fc4" />
          <path d="M10 14h15v10H10z" fill="#f0b674" />
          <path d="m10.500 15 7 7 7-7" stroke="#fff" fill="none" strokeWidth="1.200" />
        </svg>
        <span className="absolute left-0 top-[4px] w-3 text-center text-white font-bold text-[12px] leading-3">O</span>
      </span>
    ),
  },
  {
    id: "rdp",
    open: true,
    icon: (
      <svg className="w-[23px] h-6" viewBox="0 0 23 24">
        <path d="m1 2 18-2v14L4 15z" fill="#c9cfd6" />
        <path d="m3 3 14-1.500v11L5 13.500z" fill="#1226c9" />
        <path d="M3 3l8-1-6 11z" fill="#0a1580" />
        <path d="M5 17h12v3H5z" fill="#d4d8db" />
        <circle cx="17.500" cy="18.500" r="5" fill="#d9ded8" stroke="#8f978f" />
        <path d="m15 20 2-2-2-2M20 16l-2 2 2 2" stroke="#2f8a35" fill="none" strokeWidth="1.200" />
      </svg>
    ),
  },
];

const Apps = () => (
  <>
    {appIcons.map(({ id, icon, open }) => (
      <div
        key={id}
        className={
          "relative w-[49px] h-10 flex items-center justify-center shrink-0 " +
          (id === "chrome" ? "bg-[#4d6169] border-r-4 border-[#3c5058]" : id === "outlook" ? "bg-[#a9682f] border-r-4 border-[#965a2a]" : "")
        }
      >
        {icon}
        {open && (
          <span
            className={
              "absolute bottom-0 h-[2px] " +
              (id === "outlook" ? "left-0 -right-1 bg-[#ff7300]" : id === "chrome" ? "left-0 -right-1 bg-[#76b9ed]" : "left-[4px] right-[5px] bg-[#76b9ed]")
            }
          />
        )}
      </div>
    ))}
  </>
);

const Clock = () => (
  <div className="w-[60px] text-center text-white leading-[19px] tracking-[-0.57px]">
    <div>12:15</div>
    <div>15/12/2020</div>
  </div>
);

const LeftBar = () => (
  <div className="w-[1920px] h-10 flex items-center bg-linear-to-r from-[#20383f] via-[#20363f] to-[#1a2442]">
    <span className="w-12 flex justify-center">
      <WinLogo />
    </span>
    <div className="w-[344px] h-10 bg-[#f2f2f2] border border-[#b4b4b4] flex items-center pl-[11px] text-[15px] text-[#444] tracking-[-0.58px]">
      <Lens color="#222" />
      <span className="ml-[12px]">Type here to search</span>
    </div>
    <span className="w-[50px] flex justify-center">
      <TaskView />
    </span>
    <Apps />
    <div className="ml-auto flex items-center text-white">
      <svg className="w-[11px] h-[7px]" viewBox="0 0 11 7" fill="none" stroke="#fff" strokeWidth="1.300">
        <path d="m1 6.300 4.500-5 4.500 5" />
      </svg>
      <svg className="w-4 h-3 ml-[10px]" viewBox="0 0 16 12" fill="none" stroke="#fff">
        <path d="M4.500 4.500h10v6h-10z" />
        <path d="M6 6h7v3H6zM15 6h1v3h-1z" fill="#fff" stroke="none" />
        <path d="M1.500 0v2M4.500 0v2M.5 2.500h5v2l-1.500 1H2l-1.500-1zM3 5v6" />
      </svg>
      <svg className="size-[13px] ml-[11px]" viewBox="0 0 13 13" fill="none" stroke="#fff" strokeWidth="1.100">
        <path d="M1 13A12 12 0 0 1 13 1M4 13a9 9 0 0 1 9-9M7 13a6 6 0 0 1 6-6" />
        <circle cx="11.500" cy="11.500" r="1.500" fill="#fff" stroke="none" />
      </svg>
      <svg className="w-[17px] h-3 ml-[8px]" viewBox="0 0 17 12" fill="none" stroke="#fff">
        <path d="M.5 4.500H3L6.500 1v10L3 7.500H.5zM9 4q1.500 2 0 4M11.500 2.500q2.500 3.500 0 7M14 1q3.500 5 0 10" />
      </svg>
      <span className="ml-[7px]">
        <DropboxMark fill="#fff" className="w-4 h-[14px]" />
      </span>
      <div className="ml-[8px]">
        <Clock />
      </div>
      <span className="relative ml-[17px] w-[17px] h-[16px]">
        <svg className="w-4 h-4" viewBox="0 0 16 16">
          <path d="M0 0h16v13H7l-3 3v-3H0z" fill="#fff" />
          <path d="M3 3.500h10M3 6.500h10M3 9.500h7" stroke="#1a2742" />
        </svg>
        <span className="absolute left-[7px] top-[6px] size-[18px] rounded-full bg-[#2e3138] border border-[#777] text-white text-[10px] leading-4 text-center font-bold tracking-[-0.5px]">17</span>
      </span>
      <span className="w-px h-10 bg-[#5c6579] ml-[18px] mr-[4px]" />
    </div>
  </div>
);

const RightBar = () => (
  <div className="w-[1920px] h-10 flex items-center bg-linear-to-r from-[#20383f] via-[#20363f] to-[#1a2442]">
    <span className="w-12 flex justify-center">
      <WinLogo />
    </span>
    <span className="w-[48px] flex justify-center">
      <Lens color="#fff" />
    </span>
    <span className="w-[49px] flex justify-center">
      <TaskView />
    </span>
    <Apps />
    <div className="ml-auto mr-1">
      <Clock />
    </div>
  </div>
);

export default function App() {
  return (
    <div className="w-[3840px] h-[1080px] bg-white overflow-hidden flex font-['Open_Sans','Noto_Sans',sans-serif] text-[12px] leading-4">
      <div className="w-[1920px] flex flex-col shrink-0">
        <Browser />
        <LeftBar />
      </div>
      <div className="w-[1920px] flex flex-col shrink-0">
        <Explorer />
        <RightBar />
      </div>
    </div>
  );
}
